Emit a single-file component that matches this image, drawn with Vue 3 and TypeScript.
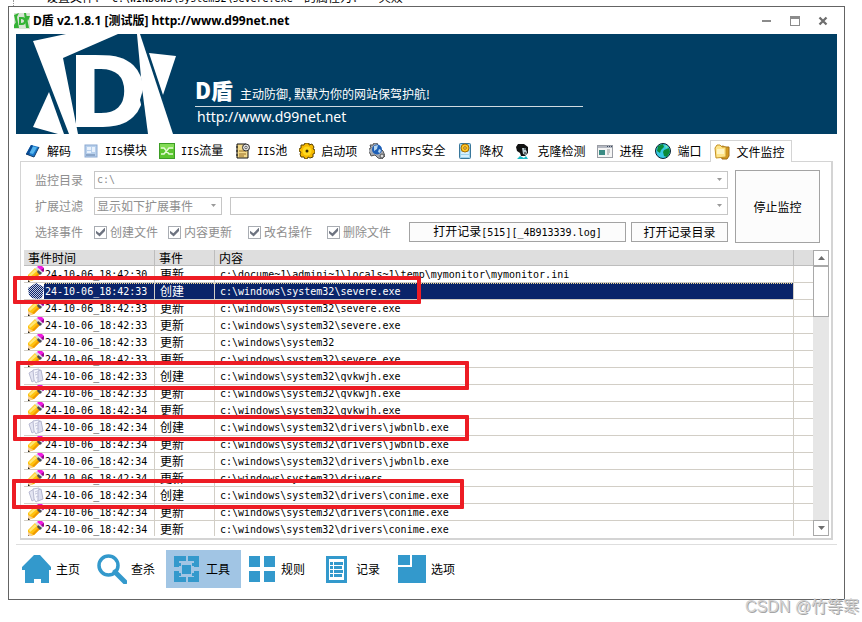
<script setup lang="ts">
import { ref } from 'vue'

interface Tab {
  icon: string
  en?: string
  cn: string
}

interface EventRow {
  time: string
  kind: '更新' | '创建'
  path: string
}

const tabs: Tab[] = [
  { icon: 'book', cn: '解码' },
  { icon: 'module', en: 'IIS', cn: '模块' },
  { icon: 'flow', en: 'IIS', cn: '流量' },
  { icon: 'pool', en: 'IIS', cn: '池' },
  { icon: 'gear', cn: '启动项' },
  { icon: 'https', en: 'HTTPS', cn: '安全' },
  { icon: 'lower', cn: '降权' },
  { icon: 'clone', cn: '克隆检测' },
  { icon: 'process', cn: '进程' },
  { icon: 'port', cn: '端口' },
  { icon: 'folder', cn: '文件监控' },
]
const activeTab = ref('folder')

const checks = ref([
  { label: '创建文件', on: true },
  { label: '内容更新', on: true },
  { label: '改名操作', on: true },
  { label: '删除文件', on: true },
])

const sys = 'c:\\windows\\system32'
const row = (sec: string, kind: EventRow['kind'], path: string): EventRow => ({
  time: `24-10-06_18:42:${sec}`,
  kind,
  path,
})
const rows: EventRow[] = [
  row('30', '更新', 'c:\\docume~1\\admini~1\\locals~1\\temp\\mymonitor\\mymonitor.ini'),
  row('33', '创建', `${sys}\\severe.exe`),
  row('33', '更新', `${sys}\\severe.exe`),
  row('33', '更新', `${sys}\\severe.exe`),
  row('33', '更新', sys),
  row('33', '更新', `${sys}\\severe.exe`),
  row('33', '创建', `${sys}\\qvkwjh.exe`),
  row('33', '更新', `${sys}\\qvkwjh.exe`),
  row('34', '更新', `${sys}\\qvkwjh.exe`),
  row('34', '创建', `${sys}\\drivers\\jwbnlb.exe`),
  row('34', '更新', `${sys}\\drivers\\jwbnlb.exe`),
  row('34', '更新', `${sys}\\drivers\\jwbnlb.exe`),
  row('34', '更新', `${sys}\\drivers`),
  row('34', '创建', `${sys}\\drivers\\conime.exe`),
  row('34', '更新', `${sys}\\drivers\\conime.exe`),
  row('34', '更新', `${sys}\\drivers\\conime.exe`),
]
const selected = ref(1)

const nav = [
  { icon: 'home', label: '主页' },
  { icon: 'search', label: '查杀' },
  { icon: 'tools', label: '工具' },
  { icon: 'rules', label: '规则' },
  { icon: 'log', label: '记录' },
  { icon: 'options', label: '选项' },
]
const activeNav = ref('tools')
</script>

<template>
  <div class="page">
    <div class="backdrop">
      <p>设置文件：<span class="en">'C:\WINDOWS\system32\severe.exe'</span>&nbsp; 的属性为：<span class="en">'&nbsp;</span> 失败</p>
    </div>

    <main class="window">
      <header class="titlebar">
        <svg class="app-icon" viewBox="0 0 16 16">
          <rect width="16" height="16" fill="#d8e4d4" />
          <path d="M0 2 5 0 3 4 5 15H3zM0 12 2 9 3 15H0zM10 0h2l3 15h-3zM12 3l4 0-2 5z" fill="#35b336" />
          <path d="M5 4h3c3 0 4 2 4 4s-1 4-4 4H5zM7 6v4c2 0 3-1 3-2s-1-2-3-2z" fill="#35b336" fill-rule="evenodd" />
        </svg>
        <h1>D盾 v2.1.8.1 [测试版] http://www.d99net.net</h1>
        <div class="controls">
          <button aria-label="最小化"><svg viewBox="0 0 10 10"><path d="M0 4h9v2H0z" fill="#8b8b8b" /></svg></button>
          <button aria-label="最大化"><svg viewBox="0 0 10 10"><path d="M0 0h10v10H0zM1 3v6h8V3z" fill="#8b8b8b" fill-rule="evenodd" /></svg></button>
          <button aria-label="关闭"><svg viewBox="0 0 10 10"><path d="M1.500 1.500l7 7M8.500 1.500l-7 7" stroke="#6e6e6e" stroke-width="2.300" /></svg></button>
        </div>
      </header>

      <section class="banner">
        <svg class="logo" viewBox="0 0 160 100">
          <g fill="#fff">
            <path d="M17 7 50 0H102L47 24 62 100H53z" />
            <path d="M33 58 17 93 42 100H48z" />
            <text x="51" y="93" class="logo-letter">D</text>
          </g>
          <path d="M118 0 128 52 124 66 132 100H138L126 0z" fill="#003e64" />
          <path d="M121 0H124L157 100H132L126 54z" fill="#fff" />
          <path d="M133 19 160 22 147 61z" fill="#fff" />
        </svg>
        <div class="slogan">
          <p class="slogan-line"><strong>D盾</strong><span>主动防御<span class="comma">,</span>默默为你的网站保驾护航!</span></p>
          <p class="site">http://www.d99net.net</p>
        </div>
      </section>

      <nav class="tabs">
        <button v-for="t in tabs" :key="t.icon" :class="{ active: t.icon === activeTab }" @click="activeTab = t.icon">
          <svg viewBox="0 0 16 16">
            <g v-if="t.icon === 'book'">
              <path d="M6 2 14 4 9 14 1 11z" fill="#1877c9" />
              <path d="M6 2 8 2.500 4 12 1 11z" fill="#0b4c94" />
              <path d="M8 3.500 12 4.500 8 11 4.500 10z" fill="#58b6ee" />
              <path d="M1 11 9 14 14 4" stroke="#123a68" fill="none" />
            </g>
            <g v-else-if="t.icon === 'module'">
              <rect x="2" y="2" width="12" height="12" fill="#b8d0ec" stroke="#8ba9d2" />
              <path d="M4 4h4v3H4zM9 4h3v5H9zM4 8h4v2H4z" fill="#e9f2fd" />
              <path d="M3 11h9v2H3z" fill="#8ca6c8" />
            </g>
            <g v-else-if="t.icon === 'flow'">
              <rect x="0.500" y="0.500" width="15" height="15" fill="#5cc62f" stroke="#3c9d25" />
              <path d="M1 1h14v5H1z" fill="#83dc55" />
              <path d="M2 5h3l5 6h4M2 11h3l5-6h4" stroke="#e5fad6" stroke-width="1.500" fill="none" />
            </g>
            <g v-else-if="t.icon === 'pool'">
              <path d="M2 1h9l2 5v9H2z" fill="#f3d98b" stroke="#111" />
              <path d="M1 4h2M1 8h2M1 12h2" stroke="#111" />
              <path d="M4 8h7M4 11h7M4 13h5" stroke="#946d27" />
              <circle cx="11" cy="4.500" r="3.500" fill="#ddd" stroke="#333" />
              <circle cx="11" cy="4.500" r="1.200" fill="#fff" stroke="#666" />
            </g>
            <g v-else-if="t.icon === 'gear'">
              <path d="M6 0h4v2l3-1 2 3-1 2 2 1v3l-2 1v3l-3 1-2-1-1 2H6l-1-2-3 0-1-3 1-2-2-1V6l2-1V2l3 0z" fill="#f5b800" stroke="#584000" />
              <circle cx="8" cy="8" r="4.500" fill="#ffd91c" />
              <circle cx="8" cy="8" r="1.500" fill="#3a2a00" />
            </g>
            <g v-else-if="t.icon === 'https'">
              <path d="M0 6 2 5 1 2 4 2 5 0h3l1 3 5 5 2 5-3 3-4-1-3-3-4 1-1-3-3-1z" fill="#a7abb2" stroke="#555" />
              <circle cx="8" cy="6.500" r="5" fill="#1d5fb6" />
              <path d="M5 3 9 2 8 6 5 8zM10 6l2 1-1 3-2-1z" fill="#b9d8f0" />
              <circle cx="13" cy="13" r="2" fill="#ddd" stroke="#555" />
            </g>
            <g v-else-if="t.icon === 'lower'">
              <rect x="2.500" y="0.500" width="11" height="15" rx="1" fill="#9ed3ee" stroke="#39779b" />
              <path d="M4 10h8M4 13h8" stroke="#e9f8ff" stroke-width="1.500" />
              <circle cx="8" cy="5" r="4" fill="#ffc727" stroke="#a56c00" />
              <circle cx="8" cy="5" r="1.300" fill="#fff3b0" stroke="#a56c00" />
            </g>
            <g v-else-if="t.icon === 'clone'">
              <path d="M3 1h6l4 3v6l-3 3H6L5 10 2 8 1 4z" fill="#111" />
              <path d="M7 5h4v2l1 2-1 3-3-1z" fill="#b9cbd0" />
              <path d="M9 6h2M9 10h2" stroke="#111" />
              <path d="M2 16l3-3 4 2 2-2 2 3z" fill="#16b9c4" />
            </g>
            <g v-else-if="t.icon === 'process'">
              <rect x="0.500" y="2.500" width="15" height="12" fill="#f5f5f5" stroke="#9a9da4" />
              <path d="M1 3h14v2H1z" fill="#b3b7c0" />
              <path d="M10 3h1v1h-1zM12 3h1v1h-1zM14 3h1v1h-1z" fill="#38465f" />
              <path d="M2 7h6v5H2z" fill="#3a8b84" />
              <path d="M10 7h3M10 9h3M10 11h2" stroke="#999" />
            </g>
            <g v-else-if="t.icon === 'port'">
              <circle cx="8" cy="8" r="7.500" fill="#35c8e2" stroke="#0a2030" />
              <path d="M3 3 8 1l1 3-3 3-1 3-3-2zM9 7l5-2 1 4-3 5-3-1-1-4z" fill="#0b8a38" />
              <path d="M10 2l3 2-2 1z" fill="#7df09a" />
            </g>
            <g v-else>
              <path d="M5 3 9 2l2 1h4v9l-2 3H8z" fill="#d59a1f" stroke="#a06c14" />
              <path d="M1 4 3 1h3l2 2h4v10L2 14z" fill="#ffe488" stroke="#c49224" />
              <path d="M3 5h7v5H3z" fill="#fff5c4" />
            </g>
          </svg>
          <span><span v-if="t.en" class="en">{{ t.en }}</span>{{ t.cn }}</span>
        </button>
      </nav>

      <section class="panel">
        <form class="settings" @submit.prevent>
          <div class="fields">
            <div class="field">
              <label for="dir">监控目录</label>
              <span class="combo grow">
                <select id="dir" class="en"><option>c:\</option></select>
                <svg viewBox="0 0 5 3"><path d="M0 0h5L2.500 3z" /></svg>
              </span>
            </div>
            <div class="field">
              <label for="filter">扩展过滤</label>
              <span class="combo filter">
                <select id="filter"><option>显示如下扩展事件</option></select>
                <svg viewBox="0 0 5 3"><path d="M0 0h5L2.500 3z" /></svg>
              </span>
              <span class="combo grow">
                <select aria-label="扩展名"><option></option></select>
                <svg viewBox="0 0 5 3"><path d="M0 0h5L2.500 3z" /></svg>
              </span>
            </div>
            <div class="field">
              <span class="caption">选择事件</span>
              <div class="checks">
                <label v-for="c in checks" :key="c.label"><input v-model="c.on" type="checkbox" />{{ c.label }}</label>
              </div>
              <button class="btn grow">打开记录<span class="en">[515][_4B913339.log]</span></button>
              <button class="btn dir">打开记录目录</button>
            </div>
          </div>
          <button class="btn stop">停止监控</button>
        </form>

        <div class="list">
          <table>
            <colgroup><col class="c-time" /><col class="c-kind" /><col /><col class="c-rest" /></colgroup>
            <thead>
              <tr><th>事件时间</th><th>事件</th><th>内容</th><th></th></tr>
            </thead>
            <tbody>
              <tr v-for="(r, i) in rows" :key="i" :class="{ selected: i === selected }" @click="selected = i">
                <td>
                  <div class="stamp">
                    <svg v-if="r.kind === '更新'" viewBox="0 0 16 16">
                      <path d="M0 9 7 2l6 5-7 7-6 2z" fill="#ffc20e" />
                      <path d="M1 9 7 3l2 2-7 6z" fill="#ffe672" />
                      <path d="M6 14l7-7-2-1-7 7z" fill="#f09a00" />
                      <path d="M7 2 9 1l6 5-2 3z" fill="#d9dde6" />
                      <path d="M10 4 14 7l-2 2-3-3z" fill="#4a4a55" />
                      <path d="M9 1 10 0h4l2 2v3l-1 1z" fill="#f01be0" />
                      <path d="M13 4 16 2v3l-1 1z" fill="#8f0c8b" />
                      <path d="M0 11l5 3-5 2z" fill="#f6cfa0" />
                      <path d="M0 14l2 2H0z" fill="#222" />
                    </svg>
                    <svg v-else viewBox="0 0 16 16">
                      <g v-if="i === selected">
                        <defs>
                          <pattern id="hatch" width="2" height="2" patternUnits="userSpaceOnUse">
                            <path d="M0 0h1v1H0zM1 1h1v1H1z" fill="#0a246a" />
                          </pattern>
                        </defs>
                        <path d="M0 5 8 0l8 4-2 11-4 1-6-1-3-3z" fill="#c3cae0" />
                        <path d="M0 5 8 0l8 4-2 11-4 1-6-1-3-3z" fill="url(#hatch)" />
                      </g>
                      <g v-else>
                        <path d="M1 5 6 2l3 9-5 3z" fill="#e4e5f2" stroke="#b9bbd2" />
                        <path d="M5 2 11 1l3 10-6 4-2-3z" fill="#f6f6fd" stroke="#b9bbd2" />
                        <path d="M10 3l3-1 2 10-5 2z" fill="#dcdef0" stroke="#b4b6cf" />
                        <path d="M7 5l2-1M7 7l3-1M8 10l3-1" stroke="#c5c7dc" />
                      </g>
                    </svg>
                    <span class="en">{{ r.time }}</span>
                  </div>
                </td>
                <td>{{ r.kind }}</td>
                <td><span class="en">{{ r.path }}</span></td>
                <td></td>
              </tr>
            </tbody>
          </table>
          <div class="scrollbar">
            <button aria-label="向上滚动"><svg viewBox="0 0 7 4"><path d="M0 4h7L3.500 0z" /></svg></button>
            <div class="thumb"></div>
            <div class="track"></div>
            <button aria-label="向下滚动"><svg viewBox="0 0 7 4"><path d="M0 0h7L3.500 4z" /></svg></button>
          </div>
        </div>
      </section>

      <footer>
        <button v-for="n in nav" :key="n.icon" :class="{ active: n.icon === activeNav }" @click="activeNav = n.icon">
          <svg viewBox="0 0 30 30" fill="#3399cc">
            <path v-if="n.icon === 'home'" d="M12 1h6l11 12v3h-2v13h-8v-4h-7v4H3V16H0v-3z" />
            <g v-else-if="n.icon === 'search'">
              <circle cx="11.500" cy="11.500" r="9.500" fill="none" stroke="#3399cc" stroke-width="3.500" />
              <path d="M18 18 28 28" stroke="#3399cc" stroke-width="5" stroke-linecap="round" />
            </g>
            <g v-else-if="n.icon === 'tools'">
              <path d="M2 2h12v5H7v6H2zM16 2h11v11h-5V7h-6zM2 17h5v6h7v5H2zM22 17h5v11H16v-5h6z" />
              <path d="M10 11h9v9h-9z" />
              <path d="M7 9h2v3H7zM20 9h2v3h-2zM7 19h2v3H7zM20 19h2v3h-2z" />
            </g>
            <path v-else-if="n.icon === 'rules'" d="M2 2h11v11H2zM17 2h11v11H17zM2 17h11v11H2zM17 17h11v11H17z" />
            <path v-else-if="n.icon === 'log'" fill-rule="evenodd" d="M4 2h21v27H4zM7 5v21h15V5zM8 8h3v3H8zM12 8h9v3h-9zM8 12h3v3H8zM12 12h8v3h-8zM8 16h3v3H8zM12 16h9v3h-9zM8 20h3v3H8zM12 20h8v3h-8z" />
            <path v-else d="M1 1h12v10H1zM15 1h14v28H1V13h14z" />
          </svg>
          <span>{{ n.label }}</span>
        </button>
      </footer>

      <i class="mark mark-severe"></i>
      <i class="mark mark-qvkwjh"></i>
      <i class="mark mark-jwbnlb"></i>
      <i class="mark mark-conime"></i>
    </main>

    <p class="watermark">CSDN @竹等寒</p>
  </div>
</template>

<style>
body {
  background: #fff;
}
</style>

<style scoped>
.page {
  position: relative;
  min-height: 100vh;
  overflow: hidden;
  box-sizing: border-box;
  padding: 0 17px 0 8px;
  font: 12px/14px "Noto Sans CJK SC", sans-serif;
  color: #000;
}
.page *,
.page *::before {
  box-sizing: border-box;
}
p,
h1 {
  margin: 0;
}
button,
select {
  font: inherit;
  color: inherit;
  margin: 0;
  padding: 0;
  border: 0;
  background: none;
}
.en {
  font-family: "DejaVu Sans Mono", monospace;
  font-size: 10px;
}
.grow {
  flex: 1;
}

.backdrop {
  display: flex;
  align-items: flex-end;
  height: 6px;
  margin-left: 5px;
  padding-left: 32px;
  overflow: hidden;
  border-left: 1px dotted #999;
  white-space: pre;
}

.window {
  position: relative;
  border: 1px solid #646464;
  padding: 0 7px 11px;
}

.titlebar {
  display: flex;
  align-items: center;
  height: 27px;
}
.app-icon {
  width: 16px;
  height: 16px;
  margin: 0 3px 0 -2px;
}
h1 {
  flex: 1;
  font: bold 12px/16px "Noto Sans", "Noto Sans CJK SC", sans-serif;
}
.controls {
  display: flex;
  gap: 18px;
  padding-right: 9px;
}
.controls button {
  display: flex;
}
.controls svg {
  width: 10px;
  height: 10px;
}

.banner {
  display: flex;
  height: 100px;
  background: #003e64;
  color: #fff;
}
.logo {
  width: 160px;
  height: 100px;
}
.logo-letter {
  font: bold 98px "DejaVu Sans", sans-serif;
}
.slogan {
  width: 407px;
  padding: 42px 0 0 19px;
}
.slogan-line {
  display: flex;
  align-items: baseline;
  gap: 7px;
  height: 31px;
  line-height: 26px;
  border-bottom: 1px solid #d0dae0;
}
.slogan-line strong {
  font-size: 22px;
  font-weight: 900;
}
.comma {
  display: inline-block;
  width: 6px;
}
.site {
  padding: 1px 0 0 2px;
  font: 14px/18px "Noto Sans", sans-serif;
}

.tabs {
  position: relative;
  z-index: 1;
  display: flex;
  align-items: stretch;
  height: 22px;
  margin: 6px 0 -1px 3px;
}
.tabs button {
  display: flex;
  align-items: center;
  gap: 6px;
  padding: 0 6px;
  white-space: nowrap;
}
.tabs svg {
  width: 16px;
  height: 16px;
}
.tabs .active {
  margin-left: 3px;
  padding: 0 7px 0 3px;
  border: 1px solid #d4d4d4;
  border-bottom: 0;
  background: #fff;
}

.panel {
  margin: 0 4px;
  padding: 8px 0 2px;
  border: 1px solid #d4d4d4;
  border-width: 1px 2px 2px 1px;
}
.settings {
  display: flex;
  gap: 7px;
  padding: 0 11px 0 14px;
  color: #8e8e8e;
}
.fields {
  flex: 1;
  display: flex;
  flex-direction: column;
  gap: 8px;
  padding-top: 1px;
}
.field {
  display: flex;
  align-items: center;
  height: 18px;
}
.field > label,
.caption {
  width: 59px;
}
.combo {
  position: relative;
  display: flex;
  height: 18px;
}
.combo select {
  appearance: none;
  width: 100%;
  padding: 0 2px;
  border: 1px solid #c6c6c6;
  border-radius: 0;
  background: #fff;
}
.combo svg {
  position: absolute;
  right: 6px;
  top: 7px;
  width: 5px;
  height: 3px;
  fill: #9a9a9a;
}
.filter {
  width: 128px;
  margin-right: 8px;
}
.checks {
  display: grid;
  grid-template-columns: 74px 80px 79px 82px;
}
.checks label {
  display: flex;
  align-items: center;
  gap: 3px;
}
.checks input {
  appearance: none;
  display: grid;
  place-items: center;
  width: 13px;
  height: 13px;
  margin: 0;
  border: 1px solid #a9adb3;
}
.checks input:checked::before {
  content: "";
  width: 9px;
  height: 9px;
  background: #6d7380;
  clip-path: polygon(0 35%, 38% 65%, 100% 0, 100% 38%, 40% 100%, 0 65%);
}
.btn {
  height: 20px;
  border: 1px solid #a3a3a3;
  background: #fcfcfc;
  color: #000;
}
.dir {
  width: 97px;
  margin-left: 5px;
}
.stop {
  width: 85px;
  height: 73px;
}

.list {
  display: flex;
  height: 286px;
  margin: 7px 2px 0 3px;
  overflow: hidden;
}
table {
  flex: 1;
  width: 0;
  table-layout: fixed;
  border-collapse: separate;
  border-spacing: 0;
}
.c-time {
  width: 131px;
}
.c-kind {
  width: 60px;
}
.c-rest {
  width: 19px;
}
th {
  height: 16px;
  padding: 0 4px;
  border: 1px solid #bdbdbd;
  border-width: 0 1px 1px 0;
  background: #dedede;
  font-weight: normal;
  line-height: 15px;
  text-align: left;
}
td {
  height: 17px;
  padding: 0 5px;
  border: 1px solid #d2cec6;
  border-width: 0 1px 1px 0;
  line-height: 16px;
  white-space: nowrap;
}
th:last-child,
td:last-child {
  border-right: 0;
}
td:first-child {
  padding: 0 0 0 4px;
}
td .en,
.stamp {
  display: block;
  height: 16px;
}
td .en {
  line-height: 18px;
}
.stamp {
  display: flex;
}
.stamp svg {
  width: 16px;
  height: 16px;
}
.stamp .en {
  flex: 1;
  padding-left: 1px;
}
.selected .stamp .en,
.selected td:nth-child(2),
.selected td:nth-child(3) {
  background: linear-gradient(90deg, #f0d890 50%, #0a246a 50%) 0 0 / 2px 1px repeat-x #0a246a;
  color: #fff;
}
.scrollbar {
  display: flex;
  flex-direction: column;
  width: 16px;
  background: #e6e6e6;
}
.scrollbar button {
  display: grid;
  place-items: center;
  height: 16px;
  border: 1px solid #a9a9a9;
  background: #fff;
}
.scrollbar svg {
  width: 7px;
  height: 4px;
  fill: #6e6e6e;
}
.thumb {
  height: 51px;
  border: 1px solid #a9a9a9;
  background: #fff;
}
.track {
  flex: 1;
}

footer {
  display: flex;
  margin-top: 4px;
  padding-top: 5px;
  border-top: 1px solid #dedede;
}
footer button {
  display: flex;
  align-items: center;
  gap: 4px;
  width: 75px;
  height: 38px;
  padding-left: 6px;
}
footer svg {
  width: 30px;
  height: 30px;
}
footer .active {
  background: #a1c5e4;
}

.mark {
  position: absolute;
  z-index: 2;
  border: 4px solid #ed1c24;
  border-radius: 1px;
  pointer-events: none;
}
.mark-severe {
  left: 4px;
  top: 269px;
  width: 408px;
  height: 28px;
}
.mark-qvkwjh {
  left: 7px;
  top: 354px;
  width: 453px;
  height: 29px;
}
.mark-jwbnlb {
  left: 4px;
  top: 408px;
  width: 456px;
  height: 26px;
}
.mark-conime {
  left: 3px;
  top: 472px;
  width: 452px;
  height: 30px;
}

.watermark {
  position: absolute;
  right: 3px;
  bottom: 4px;
  font: 16px/22px "Liberation Sans", "Noto Sans CJK SC", sans-serif;
  color: #d2d2d2;
  text-shadow: 1px 1px 0 #a6a6a6;
}
</style>
